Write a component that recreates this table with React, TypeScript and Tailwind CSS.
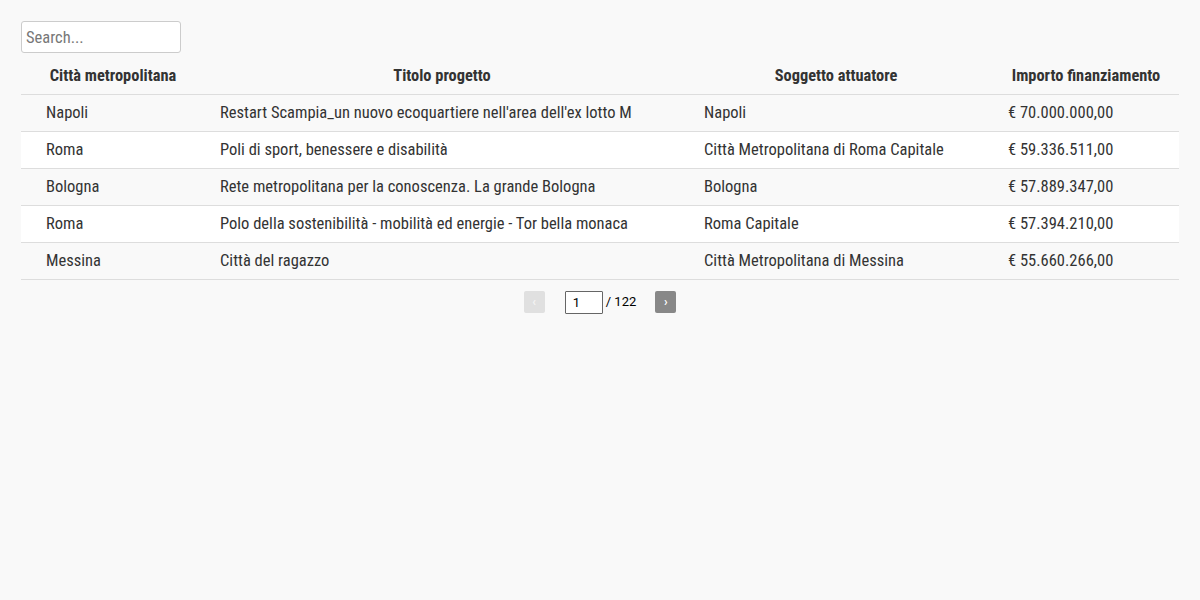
import React from "react";

const rows = [
  ["Napoli", "Restart Scampia_un nuovo ecoquartiere nell'area dell'ex lotto M", "Napoli", "€ 70.000.000,00"],
  ["Roma", "Poli di sport, benessere e disabilità", "Città Metropolitana di Roma Capitale", "€ 59.336.511,00"],
  ["Bologna", "Rete metropolitana per la conoscenza. La grande Bologna", "Bologna", "€ 57.889.347,00"],
  ["Roma", "Polo della sostenibilità - mobilità ed energie - Tor bella monaca", "Roma Capitale", "€ 57.394.210,00"],
  ["Messina", "Città del ragazzo", "Città Metropolitana di Messina", "€ 55.660.266,00"],
];

const widths = ["w-[174px]", "w-[484px]", "w-[304px]", "w-[196px]"];
const headers = ["Città metropolitana", "Titolo progetto", "Soggetto attuatore", "Importo finanziamento"];

export default function App() {
  return (
    <div
      className="min-h-[600px] w-full bg-[#f9f9f9] text-[#333333] px-[21px] pt-[21px]"
      style={{ fontFamily: '"Roboto Condensed", Roboto, "Liberation Sans", sans-serif' }}
    >
      <input
        placeholder="Search..."
        className="block w-[160px] h-[32px] border border-[#cccccc] rounded-[3px] bg-white px-[4px] text-[16.5px] placeholder:text-[#777777] outline-none"
      />
      <table className="w-[1158px] border-collapse text-[16.5px] table-fixed">
        <thead>
          <tr className="h-[41px] border-b border-[#dddddd]">
            {headers.map((h, i) => (
              <th key={i} className={`${widths[i]} pl-[25px] pr-[15px] pt-[6px] text-center font-bold text-[16.4px] text-[#333333]`}>
                {h}
              </th>
            ))}
          </tr>
        </thead>
        <tbody>
          {rows.map((r, ri) => (
            <tr
              key={ri}
              className={`h-[37px] border-b border-[#dddddd] ${ri % 2 === 1 ? "bg-white" : "bg-[#f9f9f9]"}`}
            >
              {r.map((c, ci) => (
                <td key={ci} className="pl-[25px] pr-[15px] pt-[2px] text-left whitespace-nowrap">
                  {c}
                </td>
              ))}
            </tr>
          ))}
        </tbody>
      </table>
      <div className="flex items-center justify-center mt-[11px] text-[13px]" style={{ fontFamily: 'Roboto, "Liberation Sans", sans-serif' }}>
        <div className="w-[21px] h-[22px] rounded-[2px] bg-[#e0e0e0] text-[#f4f4f4] flex items-center justify-center text-[12px] font-bold">
          ‹
        </div>
        <input
          defaultValue="1"
          className="ml-[20px] w-[38px] h-[23px] border border-[#666666] rounded-[1px] bg-white px-[7px] text-[13px] text-black outline-none"
        />
        <span className="ml-[3px] text-black">/ 122</span>
        <div className="ml-[19px] w-[21px] h-[22px] rounded-[2px] bg-[#888888] text-white flex items-center justify-center text-[12px] font-bold">
          ›
        </div>
      </div>
    </div>
  );
}
